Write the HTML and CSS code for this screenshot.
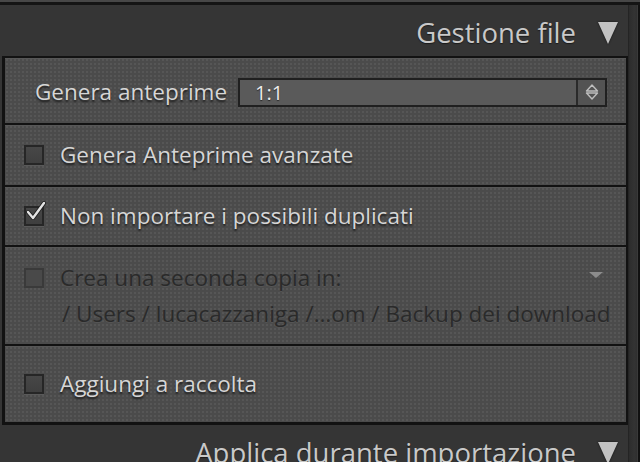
FILE: index.html
```html
<!DOCTYPE html>
<html lang="it">
<head>
  <meta charset="UTF-8">
  <meta name="viewport" content="width=device-width, initial-scale=1.0">
  <title>Gestione file</title>
  <link rel="stylesheet" href="styles.css">
</head>
<body>
  <div class="app">
    <div class="col">
      <header class="section-head">
        <h2>Gestione file</h2>
        <span class="disclosure"></span>
      </header>

      <div class="panel">
        <div class="row row-previews">
          <label class="field-label">Genera anteprime</label>
          <div class="select">
            <span class="select-value">1:1</span>
            <span class="stepper">
              <svg width="14" height="18" viewBox="0 0 14 18">
                <path d="M7 2 L12.5 8 H1.5 Z" fill="none" stroke="#bdbdbd" stroke-width="1.4" stroke-linejoin="round"/>
                <path d="M7 16 L12.5 10 H1.5 Z" fill="none" stroke="#bdbdbd" stroke-width="1.4" stroke-linejoin="round"/>
              </svg>
            </span>
          </div>
        </div>

        <div class="row row-smart">
          <span class="check"></span>
          <span class="option">Genera Anteprime avanzate</span>
        </div>

        <div class="row row-dupes">
          <span class="check">
            <svg class="tick" width="22" height="22" viewBox="0 0 22 22">
              <path d="M3 11 L8 17 L19 2" fill="none" stroke="#1e1e1e" stroke-width="4" stroke-linecap="round" stroke-linejoin="round"/>
              <path d="M3 11 L8 17 L19 2" fill="none" stroke="#e4e4e4" stroke-width="2.4" stroke-linecap="round" stroke-linejoin="round"/>
            </svg>
          </span>
          <span class="option">Non importare i possibili duplicati</span>
        </div>

        <div class="row row-backup is-disabled">
          <div class="backup-line">
            <span class="check"></span>
            <span class="option">Crea una seconda copia in:</span>
            <span class="mini-arrow"></span>
          </div>
          <div class="backup-path">/ Users / lucacazzaniga /…om / Backup dei download</div>
        </div>

        <div class="row row-collection">
          <span class="check"></span>
          <span class="option">Aggiungi a raccolta</span>
        </div>
      </div>

      <header class="section-head">
        <h2>Applica durante importazione</h2>
        <span class="disclosure"></span>
      </header>
    </div>
    <div class="gutter"></div>
  </div>
</body>
</html>
```

FILE: styles.css
```css
* {
  box-sizing: border-box;
  font-family: 'Open Sans', 'Lato', sans-serif;
}
body {
  margin: 0;
  width: 640px;
  height: 462px;
  overflow: hidden;
  background: #353535;
  border-top: 2px solid #474747;
}
.app {
  display: flex;
  border-top: 3px solid #141414;
  height: 460px;
}
.col {
  width: 628px;
  display: flex;
  flex-direction: column;
}
.gutter {
  width: 12px;
  background: linear-gradient(90deg, #2c2c2c, #333 60%, #2e2e2e);
  border-left: 1px solid #242424;
  border-right: 2px solid #111;
  box-shadow: inset -1px 0 0 #3a3a3a;
}

/* section headers */
.section-head {
  height: 51px;
  flex-shrink: 0;
  display: flex;
  align-items: flex-start;
  justify-content: flex-end;
  padding: 9px 10px 0 0;
  background: #353535;
}
.section-head h2 {
  margin: 0;
  font-weight: 400;
  font-size: 27.5px;
  line-height: 38px;
  color: #c9c9c9;
  text-shadow: 0 1px 1px #1a1a1a;
}
.disclosure {
  width: 0;
  height: 0;
  margin: 8px 0 0 22px;
  border-left: 10px solid transparent;
  border-right: 10px solid transparent;
  border-top: 22px solid #c2c2c2;
  filter: drop-shadow(0 0 1px #111);
}

/* panel */
.panel {
  margin-left: 2px;
  display: flex;
  flex-direction: column;
  gap: 2px;
  padding: 2px 2px 3px 3px;
  background: #121212;
  flex-shrink: 0;
}
.row {
  display: flex;
  align-items: center;
  padding-left: 19px;
  background-color: #4b4b4b;
  background-image: radial-gradient(rgba(255,255,255,0.06) 0.8px, transparent 1px);
  background-size: 4px 4px;
  box-shadow: inset 0 1px 0 #575757;
}
.row-previews { height: 65px; padding-left: 30px; padding-top: 3px; }
.row-smart { height: 60px; }
.row-dupes { height: 58px; }
.row-backup {
  height: 97px;
  flex-direction: column;
  align-items: stretch;
  justify-content: center;
  gap: 6px;
}
.row-collection { height: 76px; }

.field-label,
.option {
  font-size: 22.5px;
  line-height: 30px;
  color: #d6d6d6;
  text-shadow: 0 2px 2px #1c1c1c;
}
.option { margin-left: 16px; }

.select {
  flex: 1;
  margin: 0 19px 0 11px;
  height: 29px;
  display: flex;
  background: #5a5a5a;
  border: 2px solid #202020;
}
.select-value {
  flex: 1;
  padding: 0 0 0 15px;
  font-size: 20px;
  line-height: 25px;
  color: #ececec;
  text-shadow: 0 1px 1px #222;
}
.stepper {
  width: 29px;
  display: flex;
  align-items: center;
  justify-content: center;
  background: #535353;
  border-left: 2px solid #2a2a2a;
}

.check {
  position: relative;
  width: 20px;
  height: 20px;
  flex-shrink: 0;
  background: linear-gradient(#474747, #3f3f3f);
  border: 2px solid #262626;
  box-shadow: 0 1px 0 #5a5a5a;
}
.tick {
  position: absolute;
  left: -1px;
  top: -7px;
}

.is-disabled .option,
.is-disabled .backup-path {
  color: #2a2a2a;
  text-shadow: 0 1px 0 #555;
}
.is-disabled .check {
  background: #494949;
  border-color: #3a3a3a;
  box-shadow: none;
}
.backup-line {
  display: flex;
  align-items: center;
}
.mini-arrow {
  margin: -6px 23px 0 auto;
  width: 0;
  height: 0;
  border-left: 7px solid transparent;
  border-right: 7px solid transparent;
  border-top: 6px solid #8c8c8c;
}
.backup-path {
  padding-left: 38px;
  font-size: 22.5px;
  line-height: 30px;
  white-space: nowrap;
}
```
